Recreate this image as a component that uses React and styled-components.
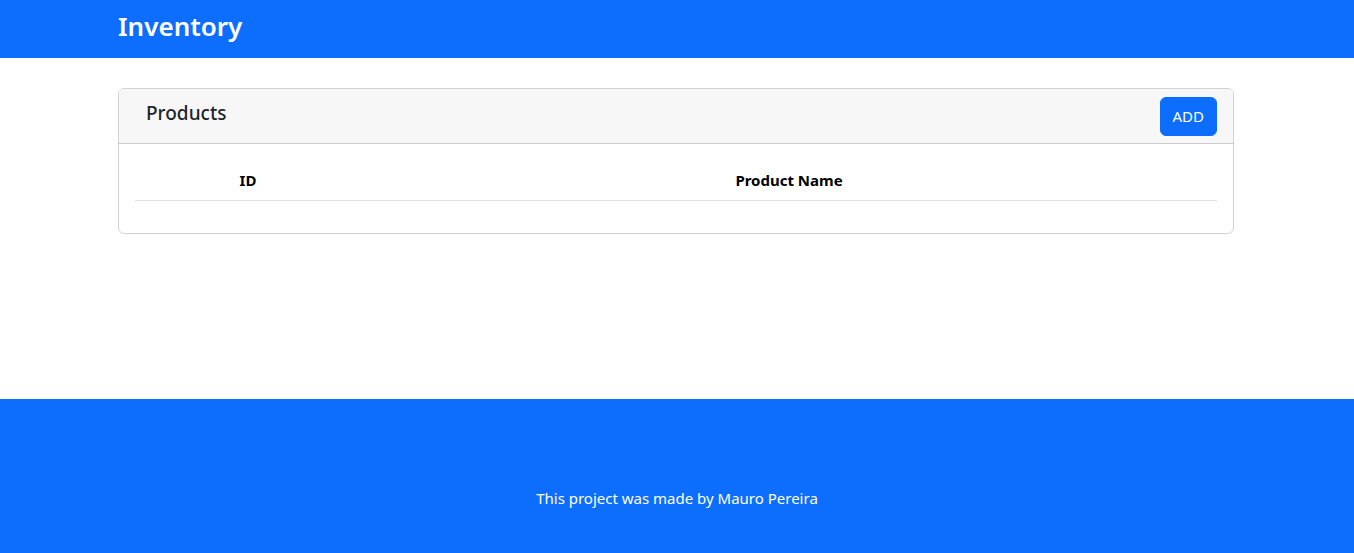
import React from 'react';
import styled, { createGlobalStyle } from 'styled-components';

const GlobalStyle = createGlobalStyle`
  * { box-sizing: border-box; }
  body {
    margin: 0;
    font-family: "Noto Sans", "Open Sans", sans-serif;
    font-size: 16px;
    line-height: 1.5;
    color: #212529;
    background: #fff;
  }
`;

const Page = styled.div`
  min-height: 100vh;
  display: flex;
  flex-direction: column;
`;

const Navbar = styled.nav`
  height: 58px;
  background: #0d6efd;
  display: flex;
  align-items: center;
`;

const Container = styled.div`
  width: 1116px;
  margin-left: calc(50% - 559px);
`;

const Brand = styled.h1`
  margin: 0;
  color: #fff;
  font-size: 26px;
  font-weight: 600;
  line-height: 1.2;
  padding-bottom: 4px;
`;

const Main = styled.main`
  flex: 1;
  padding-top: 30px;
`;

const Card = styled.section`
  border: 1px solid rgba(0, 0, 0, 0.175);
  border-radius: 6px;
  overflow: hidden;
`;

const CardHeader = styled.header`
  display: flex;
  justify-content: space-between;
  align-items: flex-start;
  padding: 8px 16px 7px 27px;
  background: #f7f7f7;
  border-bottom: 1px solid rgba(0, 0, 0, 0.175);
`;

const CardTitle = styled.h5`
  margin: 0;
  padding-top: 5px;
  font-size: 19px;
  font-weight: 500;
  line-height: 1.2;
`;

const Button = styled.button`
  font-family: inherit;
  font-size: 15px;
  line-height: 1.5;
  color: #fff;
  background: #0d6efd;
  border: 1px solid #0d6efd;
  border-radius: 6px;
  padding: 7px 12px;
  cursor: pointer;
`;

const CardBody = styled.div`
  padding: 16px;
`;

const Table = styled.table`
  width: 100%;
  border-collapse: collapse;
  margin-bottom: 16px;
`;

const Th = styled.th`
  width: ${(p) => p.$width || 'auto'};
  padding: 8px;
  text-align: center;
  font-size: 15px;
  font-weight: 700;
  color: #000;
  line-height: 24px;
  border-bottom: 1px solid #dee2e6;
`;

const Footer = styled.footer`
  height: 154px;
  background: #0d6efd;
  color: #fff;
  text-align: center;
  padding-top: 88px;
  font-size: 15px;
`;

export default function App() {
  return (
    <Page>
      <GlobalStyle />
      <Navbar>
        <Container>
          <Brand>Inventory</Brand>
        </Container>
      </Navbar>
      <Main>
        <Container>
          <Card>
            <CardHeader>
              <CardTitle>Products</CardTitle>
              <Button>ADD</Button>
            </CardHeader>
            <CardBody>
              <Table>
                <thead>
                  <tr>
                    <Th $width="226px">ID</Th>
                    <Th>Product Name</Th>
                  </tr>
                </thead>
                <tbody></tbody>
              </Table>
            </CardBody>
          </Card>
        </Container>
      </Main>
      <Footer>This project was made by Mauro Pereira</Footer>
    </Page>
  );
}
